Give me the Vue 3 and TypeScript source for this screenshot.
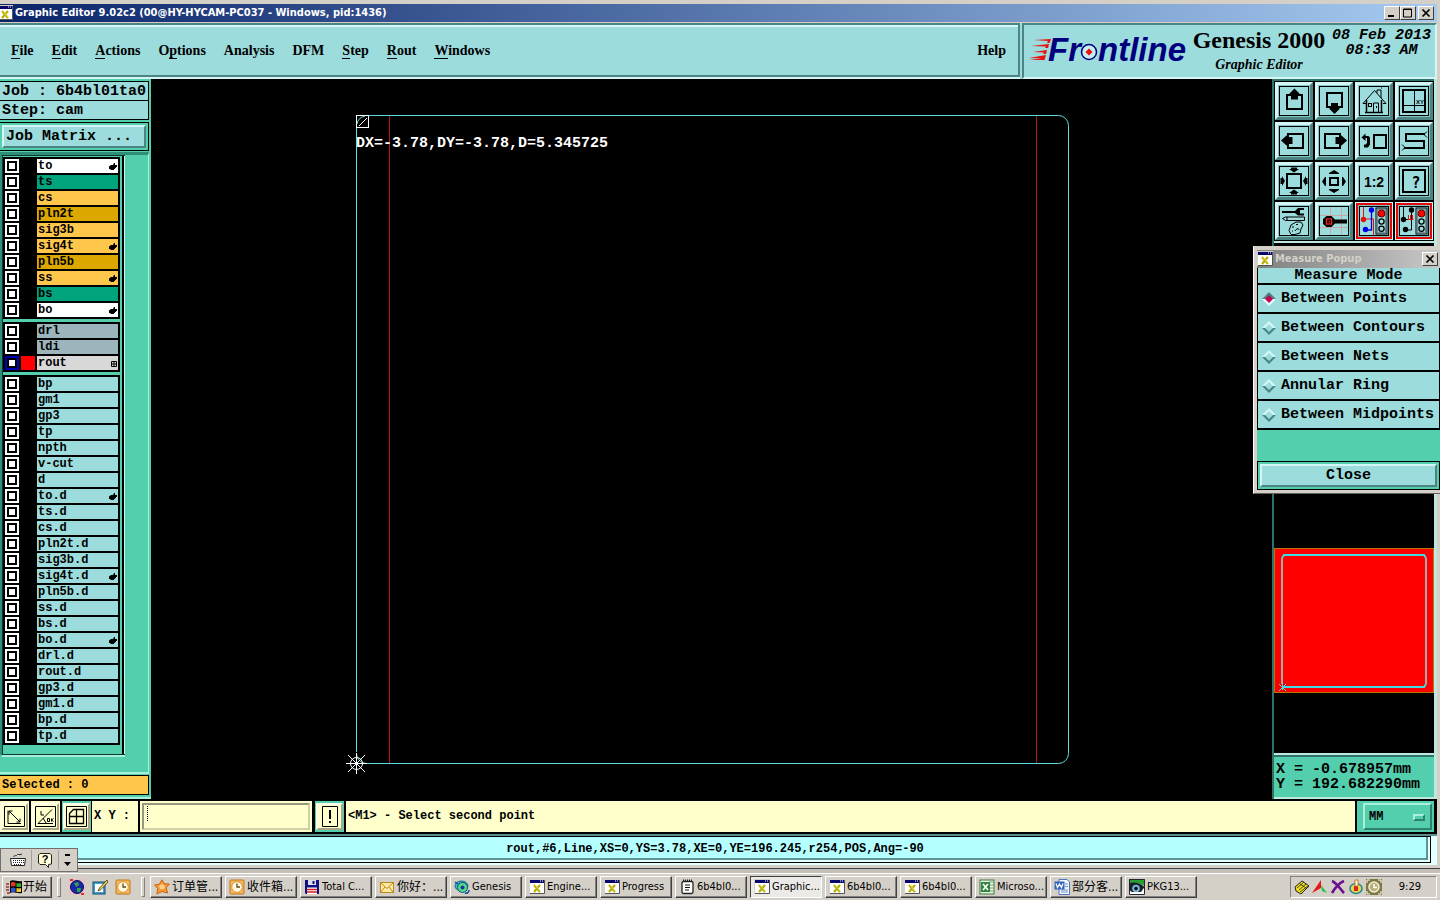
<script setup lang="ts">
import { ref } from 'vue'

interface Layer {
  name: string
  tone: string
  mark?: 'hand' | 'grid'
  active?: boolean
}
interface MenuEntry {
  before: string
  key: string
  after: string
}
interface Task {
  text: string
  icon: string
  active?: boolean
  cjk?: boolean
}

const menus: MenuEntry[] = [
  { before: '', key: 'F', after: 'ile' },
  { before: '', key: 'E', after: 'dit' },
  { before: '', key: 'A', after: 'ctions' },
  { before: 'O', key: 'p', after: 'tions' },
  { before: 'Analysis', key: '', after: '' },
  { before: 'DFM', key: '', after: '' },
  { before: '', key: 'S', after: 'tep' },
  { before: '', key: 'R', after: 'out' },
  { before: '', key: 'W', after: 'indows' },
]

const plain = (name: string, mark?: 'hand'): Layer => ({ name, tone: 'cyan', mark })

const layerGroups: Layer[][] = [
  [
    { name: 'to', tone: 'white', mark: 'hand' },
    { name: 'ts', tone: 'green' },
    { name: 'cs', tone: 'orange' },
    { name: 'pln2t', tone: 'gold' },
    { name: 'sig3b', tone: 'orange' },
    { name: 'sig4t', tone: 'orange', mark: 'hand' },
    { name: 'pln5b', tone: 'gold' },
    { name: 'ss', tone: 'orange', mark: 'hand' },
    { name: 'bs', tone: 'green' },
    { name: 'bo', tone: 'white', mark: 'hand' },
  ],
  [
    { name: 'drl', tone: 'slate' },
    { name: 'ldi', tone: 'slate' },
    { name: 'rout', tone: 'silver', mark: 'grid', active: true },
  ],
  [
    plain('bp'), plain('gm1'), plain('gp3'), plain('tp'), plain('npth'), plain('v-cut'), plain('d'),
    plain('to.d', 'hand'), plain('ts.d'), plain('cs.d'), plain('pln2t.d'), plain('sig3b.d'),
    plain('sig4t.d', 'hand'), plain('pln5b.d'), plain('ss.d'), plain('bs.d'), plain('bo.d', 'hand'),
    plain('drl.d'), plain('rout.d'), plain('gp3.d'), plain('gm1.d'), plain('bp.d'), plain('tp.d'),
  ],
]

const lights =
  '<rect x="17" y="2" width="11" height="26" fill="none" stroke="#000"/><rect x="18.500" y="3.500" width="8" height="23" fill="none" stroke="#789"/><circle cx="22.500" cy="7.500" r="3.500" fill="red" stroke="#600"/><circle cx="22.500" cy="15.500" r="2.600" fill="#9cdcdc" stroke="#000" stroke-width="1.300"/><circle cx="22.500" cy="22.700" r="2.600" fill="#9cdcdc" stroke="#000" stroke-width="1.300"/>'

const tools: { name: string; alert?: boolean; art: string }[] = [
  { name: 'Pan up', art: '<rect x="8" y="9" width="15" height="14" fill="none" stroke="#000" stroke-width="2"/><path d="M15.500 2.500l5 5v1.500H19v4.500h-7V9h-1.500V7.500z"/>' },
  { name: 'Pan down', art: '<rect x="8" y="7" width="15" height="14" fill="none" stroke="#000" stroke-width="2"/><path d="M15.500 28l5-5v-1.500H19V17h-7v4.500h-1.500V23z"/>' },
  { name: 'Home', art: '<g fill="none" stroke="#000"><path d="M4 17.500L15.500 4.500 27 17.500M4 17.500h3M24 17.500h3M18 7V4h4v8M22.500 1.500v1"/><path d="M7.500 14v12.500h15V14M6 26.500h18" stroke-width="1.500"/><rect x="9.500" y="17.500" width="3" height="3"/><path d="M14.500 26v-9h5v9M17.500 20v2"/></g>' },
  { name: 'XY window', art: '<rect x="4" y="4" width="22" height="22" fill="none" stroke="#000" stroke-width="2"/><path d="M15.500 4v22M4 19.500h22" stroke="#000"/><text x="17" y="18" font-family="Liberation Sans" font-size="6" font-weight="bold">XY</text>' },
  { name: 'Pan left', art: '<rect x="9" y="8" width="15" height="14" fill="none" stroke="#000" stroke-width="2"/><path d="M2 14.500l5.500-5H9V11h4.500v7H9v1.500H7.500z"/>' },
  { name: 'Pan right', art: '<rect x="6" y="8" width="15" height="14" fill="none" stroke="#000" stroke-width="2"/><path d="M28 14.500l-5.500-5H21V11h-4.500v7H21v1.500h1.500z"/>' },
  { name: 'Previous view', art: '<rect x="15" y="9" width="12" height="13" fill="none" stroke="#000" stroke-width="2"/><path d="M2.500 11.500l4-4v2.500h3l1.500 1.500v7l-2 3H5v-3h2l1-2v-4.500H6.500v3z"/>' },
  { name: 'Snake path', art: '<g fill="none" stroke="#000"><path d="M26 8H7v7h18v7H5" stroke-width="2"/><path d="M25 8.500l3-3M25 8.500l3 3M6 21.500l-3-3M6 21.500l-3 3"/></g>' },
  { name: 'Zoom in', art: '<rect x="8" y="8" width="14" height="14" fill="none" stroke="#000" stroke-width="2"/><path d="M12 1.500h6v1.500h2L15 6.500 10 3h2zM12 28.500h6V27h2l-5-3.500L10 27h2zM1.500 12v6H3v2l3-5-3-5v2zM28.500 12v6H27v2l-3-5 3-5v2z"/>' },
  { name: 'Zoom out', art: '<rect x="11" y="12" width="8" height="7" fill="none" stroke="#000" stroke-width="2"/><path d="M15 4l5 3v1H10V7zM15 27l5-3v-1H10v1zM3 15.500L6 11h1v9H6zM27 15.500L24 11h-1v9h1z"/>' },
  { name: 'One to two', art: '<text x="15" y="21" text-anchor="middle" font-family="Liberation Sans" font-size="14" font-weight="bold">1:2</text>' },
  { name: 'Query', art: '<rect x="4" y="4" width="22" height="22" fill="none" stroke="#000" stroke-width="2"/><text x="17" y="22" text-anchor="middle" font-family="DejaVu Sans Mono" font-size="15" font-weight="bold">?</text>' },
  { name: 'Utilities', art: '<path d="M3 5h13l3-3h6v2h-4v3.500h4v2h-6L16 7H3z"/><path d="M3.500 12.500l3-1.500h19v3.500h-19zM8 11v3.500" fill="none" stroke="#000"/><path d="M12 19l5-3h5l2 3-2 4-1 4-5 1.500h-4l-2-4z" fill="none" stroke="#000"/><path d="M13 21h2M17 18.500h2M13 25h1M16 25c2-3 4-3 4-1" fill="none" stroke="#000"/>' },
  { name: 'Probe', art: '<path d="M11.500 1v28M22.500 1v28M1 9.500h28M1 21.500h28" stroke="#c9a6a6"/><path d="M7.500 10h5l3.500 3.500h12v4H16L12.500 21h-5L4 18v-5z"/><rect x="7.500" y="13" width="5" height="5" fill="none" stroke="#e22" stroke-width="1.300"/><rect x="9.500" y="15" width="1.500" height="1.500" fill="#e22"/>' },
  { name: 'Net display', alert: true, art: '<path d="M4.500 1v12h10v16" fill="none" stroke="#e01010"/><path d="M12.500 4v20H6" fill="none" stroke="#0000e8" stroke-width="1.300"/><circle cx="4.500" cy="13.500" r="2.700" fill="#e01010"/><circle cx="12.500" cy="4" r="2.700" fill="#0000e8"/><circle cx="6.500" cy="23.500" r="2.700" fill="#0000e8"/>' + lights },
  { name: 'Net check', alert: true, art: '<path d="M4.500 1v12M12.500 4v20H6M4.500 13.500h8" fill="none" stroke="#000"/><circle cx="4.500" cy="13.500" r="2.700"/><circle cx="12.500" cy="4" r="2.700"/><circle cx="6.500" cy="23.500" r="2.700"/><path d="M8.500 13.500h6M9.500 13V9M11.500 13V9M13.500 13V9" stroke="#e01010" fill="none"/>' + lights },
]

const xwin =
  '<rect x=".5" y=".5" width="15" height="14" fill="#fff" stroke="#d4d0c8"/><path d="M1 1h14v3H1z" fill="#08086a"/><path d="M11 2h1M13 2h1" stroke="#fff"/><path d="M15.500 1v13.500H1" stroke="#555" fill="none"/><path d="M5 6l6 7M11 6l-6 7" stroke="#b8b000" stroke-width="2.200"/><path d="M6 6l5 6" stroke="#e8e060"/>'
const clock =
  '<rect x="1" y="1" width="14" height="14" rx="1" fill="#f4b860" stroke="#c07818"/><circle cx="8" cy="8" r="5.300" fill="#fff8e0" stroke="#e09838"/><path d="M8 4.500V8h3" stroke="#664418" stroke-width="1.300" fill="none"/>'
const notepad =
  '<rect x="3" y="2.500" width="11" height="12" rx="1.500" fill="#fff" stroke="#222" stroke-width="1.300"/><path d="M4 1.500h9" stroke="#222" stroke-width="2" stroke-dasharray="1 1"/><path d="M6 6h5M6 8.500h5M6 11h4" stroke="#111" stroke-width="1.200"/>'

const icons: Record<string, string> = {
  xwin,
  clock,
  notepad,
  star: '<path d="M8 .8l2.200 4 5.200.2-3.200 3.700 1.500 5.300L8 12.500 2.800 15l1-5.500L.5 6l4.800-.8z" fill="#f49838" stroke="#cc6410"/><path d="M5 7l3-2 3 2-1 3H6z" fill="#ffd08a"/>',
  disk: '<path d="M1 1h14v14H2l-1-1z" fill="#101080"/><rect x="4" y="1" width="8" height="5" fill="#dde"/><rect x="8.500" y="2" width="2" height="3" fill="#101080"/><rect x="3" y="8.500" width="10" height="6.500" fill="#fff"/><path d="M3 10.500h10M3 13h10" stroke="#d02020" stroke-width="1.300"/>',
  mail: '<rect x="1.500" y="3.500" width="13" height="10" fill="#ffe9a0" stroke="#b88a20"/><path d="M1.500 3.500L8 9.500l6.500-6M1.500 13.500L6 8M14.500 13.500L10 8" fill="none" stroke="#b88a20"/>',
  genesis: '<ellipse cx="7.500" cy="7" rx="6.500" ry="5" fill="#38b8c0" stroke="#107080"/><circle cx="8.500" cy="8.500" r="5" fill="#58d880" stroke="#1048a0"/><circle cx="8.500" cy="8.500" r="2" fill="#1838a0"/><path d="M1 3l3 2M11 14c2 1 4-1 4-3" stroke="#104890" stroke-width="1.500" fill="none"/>',
  excel: '<rect x="1" y="1" width="14" height="14" fill="#e7f3e2" stroke="#3a7a38"/><path d="M10 3h5M10 6h5M10 9h5M10 12h5" stroke="#78a878"/><rect x="2" y="3" width="9" height="10" fill="#2f8540"/><path d="M4 5l5 6M9 5l-5 6" stroke="#fff" stroke-width="1.600"/>',
  word: '<path d="M5 .5h8l2.500 2.500v12.500H5z" fill="#f4f8ff" stroke="#5074b8"/><path d="M11 5h3M11 7.500h3M7 11h7M7 13h7" stroke="#7090cc"/><rect x=".5" y="2.500" width="10" height="8" fill="#3464b8"/><path d="M2 4.500l1.500 4 2-3.500 2 3.500 1.500-4" fill="none" stroke="#fff" stroke-width="1.200"/>',
  eye: '<rect width="16" height="16" fill="#fff"/><path d="M0 0h16v7L9 4 0 5z" fill="#28a030"/><path d="M0 4.500C5 2 12 4 15.500 8L12 13H3L0 11z" fill="#182028"/><circle cx="7" cy="9.500" r="3.800" fill="#78b4d8"/><circle cx="7" cy="9.500" r="1.700" fill="#000"/><path d="M.5.5h15v15H.5z" fill="none" stroke="#223"/>',
  globe: '<rect width="16" height="16" fill="#e8c0c8"/><circle cx="8" cy="8" r="6.500" fill="#1828a8" stroke="#081050"/><path d="M5 4l4-1 1 3-3 2zM8 9l4 0-1 4-3 0z" fill="#38a048"/><path d="M1 1l3 0M12 15h3" stroke="#d83030" stroke-width="2"/>',
  desk: '<rect x="1" y="3" width="12" height="12" fill="#48a0c8" stroke="#124a70"/><rect x="3" y="5" width="8" height="8" fill="#fff"/><path d="M15 1L7.500 9 6 12l3-1.500L16 3z" fill="#f0d060" stroke="#443310" stroke-width=".8"/>',
}

const quick = [
  { name: 'Browser', icon: 'globe' },
  { name: 'Show desktop', icon: 'desk' },
  { name: 'Outlook', icon: 'clock' },
]

const tasks: Task[] = [
  { text: '订单管...', icon: 'star', cjk: true },
  { text: '收件箱...', icon: 'clock', cjk: true },
  { text: 'Total C...', icon: 'disk' },
  { text: '你好：...', icon: 'mail', cjk: true },
  { text: 'Genesis', icon: 'genesis' },
  { text: 'Engine...', icon: 'xwin' },
  { text: 'Progress', icon: 'xwin' },
  { text: '6b4bl0...', icon: 'notepad' },
  { text: 'Graphic...', icon: 'xwin', active: true },
  { text: '6b4bl0...', icon: 'xwin' },
  { text: '6b4bl0...', icon: 'xwin' },
  { text: 'Microso...', icon: 'excel' },
  { text: '部分客...', icon: 'word', cjk: true },
  { text: 'PKG13...', icon: 'eye' },
]

const modes = ['Between Points', 'Between Contours', 'Between Nets', 'Annular Ring', 'Between Midpoints']
const mode = ref(modes[0])
const xy = ref('')
</script>

<template>
  <div class="desktop">
    <div class="window">
      <header class="titlebar">
        <svg class="ico" viewBox="0 0 16 16" v-html="xwin"></svg>
        <h1>Graphic Editor 9.02c2 (00@HY-HYCAM-PC037 - Windows, pid:1436)</h1>
        <div class="winbtns">
          <button type="button" aria-label="Minimize"><svg viewBox="0 0 12 10"><path d="M2 7h6v2H2z" /></svg></button>
          <button type="button" aria-label="Maximize"><svg viewBox="0 0 12 10"><path d="M1.500 1v8h8V1zM1 1.500h9" fill="none" stroke="#000" /></svg></button>
          <button type="button" class="x" aria-label="Close window"><svg viewBox="0 0 12 10"><path d="M2.500 1.500l7 7M9.500 1.500l-7 7" stroke="#000" stroke-width="1.700" /></svg></button>
        </div>
      </header>

      <div class="head">
        <nav class="menubar">
          <a v-for="m in menus" :key="m.before + m.key" href="#">{{ m.before }}<span class="key">{{ m.key }}</span>{{ m.after }}</a>
          <a href="#" class="help">Help</a>
        </nav>
        <div class="brand">
          <div class="logo">
            <svg class="speed" viewBox="0 0 22 24">
              <path fill="#e81010" d="M5 2l17-1-1.500 4H18l1-2zM2 8l18-2-1 4h-3l1-1.500zM4 14l14-2-1 4h-3l1-1.500zM0 20l17-3-1.500 5H0l13-1.500z" />
            </svg>
            <span>Fr</span>
            <svg class="target" viewBox="0 0 18 20">
              <circle cx="9" cy="10" r="7.500" fill="#c8eeee" stroke="#00007f" stroke-width="1.500" />
              <path d="M9 6.500l3.500 3.500L9 13.500 5.500 10z" fill="#e81010" />
            </svg>
            <span>ntline</span>
          </div>
          <div class="product">
            <strong>Genesis 2000</strong>
            <em>Graphic Editor</em>
          </div>
          <div class="date"><span>08 Feb 2013</span><span>08:33 AM</span></div>
        </div>
      </div>

      <main class="work">
        <aside class="left">
          <div class="jobinfo">
            <div>Job : 6b4bl01ta0</div>
            <div>Step: cam</div>
          </div>
          <div class="matrix"><button type="button">Job Matrix ...</button></div>
          <div class="layerpane">
            <div class="layerbox">
              <div v-for="(g, i) in layerGroups" :key="i" class="group">
                <label v-for="l in g" :key="l.name" class="layer">
                  <input type="checkbox" :class="{ on: l.active }" />
                  <span class="swatch" :class="{ red: l.active }"></span>
                  <span class="lname" :class="l.tone">
                    {{ l.name }}
                    <svg v-if="l.mark === 'hand'" viewBox="0 0 8 7"><path d="M0 3.500L2 2h2l1-2h1v2h2v2H7v1H6v1H5v1H2L1 6H0z" /></svg>
                    <svg v-else-if="l.mark === 'grid'" viewBox="0 0 8 7"><path d="M2.500 1.500h5v5h-5zM5 1v5.500M2 4h6" fill="none" stroke="#000" /></svg>
                  </span>
                </label>
              </div>
            </div>
          </div>
          <div class="selected">Selected : 0</div>
        </aside>

        <svg class="canvas" viewBox="151 79 1121 720" role="img" aria-label="Board outline">
          <path d="M389.500 116v647M1036.500 116v647" stroke="#b41818" />
          <path d="M356.500 752V115.500h702a10 10 0 0 1 10 10V753.500a10 10 0 0 1-10 10H366a10 10 0 0 1-9.500-10" fill="none" stroke="#5cdcdc" />
          <rect x="356.500" y="115.500" width="12" height="12" fill="none" stroke="#fff" />
          <path d="M359 126l8-8" stroke="#fff" />
          <path d="M357 124a10 10 0 0 1 8-8" fill="none" stroke="#5cdcdc" />
          <text x="356" y="147">DX=-3.78,DY=-3.78,D=5.345725</text>
          <g stroke="#fff" fill="none">
            <circle cx="356.500" cy="763.500" r="6" />
            <path d="M346 763.500h21M356.500 753v21M348 755l17 17M365 755l-17 17" />
          </g>
        </svg>

        <aside class="right">
          <div class="tools">
            <button v-for="t in tools" :key="t.name" type="button" :aria-label="t.name" :class="{ alert: t.alert }">
              <svg viewBox="0 0 30 30" v-html="t.art"></svg>
            </button>
          </div>
          <div class="overview">
            <svg viewBox="0 0 160 145" role="img" aria-label="Overview">
              <rect x=".5" y=".5" width="159" height="144" fill="red" stroke="#b87800" />
              <path d="M9 7h142M9 139h142" stroke="#40dce4" stroke-width="2" />
              <path d="M8 10v126M152 10v126" stroke="#a8a8a8" stroke-width="2" />
              <path d="M8 10l2-3M150 7l2 3M152 136l-2 3" stroke="#40dce4" stroke-width="2" />
              <path d="M5 136l7 7M12 136l-7 7M8.500 134v8" stroke="#40dce4" />
            </svg>
          </div>
          <div class="coords"><span>X = -0.678957mm</span><span>Y = 192.682290mm</span></div>
        </aside>
      </main>

      <div class="prompt">
        <div class="pcell"><button type="button" aria-label="Distance snap"><svg viewBox="0 0 21 21"><path d="M.5.500h20v20H.5zM4 4.500v13h13M5 5l11 11M5 8.500V5h3.500M16 12.500V16h-3.500" fill="none" stroke="#000" /></svg></button></div>
        <div class="pcell"><button type="button" aria-label="Angle snap"><svg viewBox="0 0 21 21"><path d="M.5.500h20v20H.5zM3 17.500h15M3 17.500L17 3.500M6 5v4h3M8 12l3 5" fill="none" stroke="#000" /><path d="M12.500 12.500h2v3h-2zM16.500 12.500v3M18.500 12.500l-2 1.500 2 1.500" fill="none" stroke="#000" /></svg></button></div>
        <div class="pcell teal"><button type="button" aria-label="Grid snap"><svg viewBox="0 0 21 21"><path d="M.5.500h20v20H.5z" fill="none" stroke="#000" /><path d="M3.500 7.500l4-4h10v14h-14zM3 10.500h15M10.500 3v15" fill="none" stroke="#000" stroke-width="1.300" /></svg></button></div>
        <label class="xy" for="xy">X Y :</label>
        <div class="entry"><input id="xy" v-model="xy" type="text" /><i class="caret"></i></div>
        <div class="pcell teal bang"><button type="button" aria-label="Alert"><svg viewBox="0 0 21 21"><path d="M3.500.500h15v20h-15z" fill="none" stroke="#000" /><path d="M10 4h2v9h-2zM10 15h2v2h-2z" /></svg></button></div>
        <output class="message">&lt;M1&gt; - Select second point</output>
        <div class="unit">
          <select aria-label="Units"><option>MM</option><option>INCH</option></select>
          <i></i>
        </div>
      </div>
      <div class="status"><p>rout,#6,Line,XS=0,YS=3.78,XE=0,YE=196.245,r254,POS,Ang=-90</p></div>
    </div>

    <section class="popup" aria-label="Measure Popup">
      <header>
        <svg class="ico" viewBox="0 0 16 16" v-html="xwin"></svg>
        <h2>Measure Popup</h2>
        <button type="button" aria-label="Close popup"><svg viewBox="0 0 12 10"><path d="M2.500 1.500l7 7M9.500 1.500l-7 7" stroke="#000" stroke-width="1.700" /></svg></button>
      </header>
      <fieldset>
        <legend>Measure Mode</legend>
        <label v-for="m in modes" :key="m">
          <input v-model="mode" type="radio" name="mode" :value="m" />
          <svg viewBox="0 0 14 14">
            <path d="M0 7l7-7 7 7z" :fill="mode === m ? '#4c8484' : '#d4f6f6'" />
            <path d="M0 7l7 7 7-7z" :fill="mode === m ? '#e4ffff' : '#4c8484'" />
            <path d="M3 7l4-4 4 4-4 4z" :fill="mode === m ? '#c80050' : '#9cdcdc'" />
          </svg>
          <span>{{ m }}</span>
        </label>
      </fieldset>
      <div class="closebox"><button type="button">Close</button></div>
    </section>

    <div class="langbar">
      <button type="button" aria-label="Keyboard">
        <svg viewBox="0 0 16 16"><path d="M.5 6.500h15l-1 7h-13zM4 5c0-3 2 0 3-2s2 1 5-1" fill="#fff" stroke="#222" /><path d="M3 8.500h11M3 10.500h11M4 12.500h8" stroke="#222" stroke-dasharray="1 1" /></svg>
      </button>
      <button type="button" aria-label="Help">
        <svg viewBox="0 0 16 16"><path d="M3 1.500h10l1.500 1.500v9l-3 .5v3l-3-3H3L1.500 11V3z" fill="#ffffd8" stroke="#222" /><text x="8" y="11" text-anchor="middle" font-family="Liberation Sans" font-size="11" font-weight="bold">?</text></svg>
      </button>
      <button type="button" aria-label="Options"><svg viewBox="0 0 16 16"><path d="M5 2h5v2H5zM4 10h7l-3.500 4z" /></svg></button>
    </div>

    <footer class="taskbar">
      <button type="button" class="start">
        <svg class="ico" viewBox="0 0 16 16"><path d="M0 5h3M0 8h3M0 11h3M1 14h3" stroke="#a03030" stroke-width="1.500" /><path d="M4 2c4-2 7 1 12 0v12c-5 1-8-2-12 0z" fill="#000" /><path d="M5 3.500c2-1 3-.5 4.500 0v4C8 7 7 7 5 7.500z" fill="#e83820" /><path d="M10.500 4c2 .5 3 .5 4.500 0v4h-4.500z" fill="#30b030" /><path d="M5 9c2-1 3-.5 4.500 0v4C8 12.500 7 12.500 5 13z" fill="#2858e0" /><path d="M10.500 9c2 .5 3 .5 4.500 0v4h-4.500z" fill="#f0c820" /></svg>
        <span>开始</span>
      </button>
      <i class="grip"></i>
      <div class="quick">
        <button v-for="q in quick" :key="q.name" type="button" :aria-label="q.name"><svg class="ico" viewBox="0 0 16 16" v-html="icons[q.icon]"></svg></button>
      </div>
      <i class="grip"></i>
      <div class="tasks">
        <button v-for="(t, i) in tasks" :key="i" type="button" :class="{ active: t.active, cjk: t.cjk }">
          <svg class="ico" viewBox="0 0 16 16" v-html="icons[t.icon]"></svg><span>{{ t.text }}</span>
        </button>
      </div>
      <div class="tray">
        <svg class="ico" viewBox="0 0 16 16"><path d="M1 8l7-6 7 5-8 8-5-3z" fill="#f0e020" stroke="#222" /><path d="M3 9l7-6M5 11l7-6M6 13l8-6M6 5l6 4" stroke="#222" stroke-width=".8" /></svg>
        <svg class="ico" viewBox="0 0 16 16"><path d="M0 14L9 1v8z" fill="#e81818" /><path d="M9 6l6 8-5-2z" fill="#20c040" /></svg>
        <svg class="ico" viewBox="0 0 16 16"><path d="M2 2c5 2 8 8 12 12M14 2C9 4 5 9 2 14" stroke="#6a1090" stroke-width="2.600" fill="none" /></svg>
        <svg class="ico" viewBox="0 0 16 16"><ellipse cx="8" cy="9.500" rx="6" ry="5" fill="#e8d840" stroke="#188898" stroke-width="1.500" /><path d="M6 7h4v5H6z" fill="#e02020" /><path d="M7 1h3v6H7z" fill="#fff" stroke="#c87818" /></svg>
        <svg class="ico" viewBox="0 0 16 16"><rect width="16" height="16" fill="#7c7840" /><circle cx="8" cy="8" r="5" fill="#b8b078" stroke="#f0f0e0" stroke-width="1.500" /><path d="M8 5v3.500h3" stroke="#fff" stroke-width="1.500" fill="none" /><path d="M1 4V1h3M12 1h3v3M15 12v3h-3M4 15H1v-3" stroke="#fff" fill="none" /></svg>
        <time>9:29</time>
      </div>
    </footer>
  </div>
</template>

<style>
html,
body {
  background: #000;
}
</style>

<style scoped>
* {
  box-sizing: border-box;
}
.desktop {
  --cyan: #9cdcdc;
  --hi: #d4f6f6;
  --lo: #4c8484;
  --teal: #54cfae;
  --gray: #d4d0c8;
  --yellow: #ffffcc;
  --ui: 'DejaVu Sans Condensed', 'Noto Sans', 'Noto Sans CJK SC', sans-serif;
  --mono: 'Liberation Mono', 'Noto Sans CJK SC', monospace;
  --serif: 'Liberation Serif', serif;
  position: relative;
  display: flex;
  flex-direction: column;
  min-height: 100vh;
  overflow: hidden;
  font-family: var(--mono);
  font-weight: bold;
  font-size: 12px;
  color: #000;
  background: var(--gray);
}
button,
input,
select {
  font: inherit;
  color: inherit;
  margin: 0;
  padding: 0;
  border: 0;
  border-radius: 0;
  background: none;
}
svg {
  display: block;
  flex: none;
}
h1,
h2,
p {
  margin: 0;
}
a {
  color: inherit;
  text-decoration: none;
}
.ico {
  width: 16px;
  height: 16px;
}
.window {
  flex: 1;
  display: flex;
  flex-direction: column;
  padding: 4px 3px 3px 0;
  border-bottom: 1px solid #404040;
}

/* title bar */
.titlebar {
  display: flex;
  align-items: center;
  gap: 2px;
  height: 18px;
  margin-bottom: 1px;
  padding-right: 3px;
  overflow: hidden;
  background: linear-gradient(90deg, #0a246a, #a6caf0);
}
.titlebar .ico {
  margin-left: -3px;
}
.titlebar h1 {
  flex: 1;
  font: bold 11px/18px var(--ui);
  color: #fff;
  white-space: nowrap;
}
.winbtns {
  display: flex;
}
.winbtns button,
.popup header button {
  display: grid;
  place-items: center;
  width: 16px;
  height: 14px;
  background: var(--gray);
  border: 1px solid;
  border-color: #fff #404040 #404040 #fff;
}
.winbtns .x {
  margin-left: 2px;
}
.winbtns svg,
.popup header button svg {
  width: 12px;
  height: 10px;
}

/* menu + brand */
.head {
  display: flex;
  height: 56px;
  background: var(--cyan);
}
.menubar {
  flex: 1;
  display: flex;
  align-items: center;
  gap: 18px;
  padding: 2px 12px 0 11px;
  border-top: 2px solid var(--lo);
  border-right: 2px solid var(--lo);
  border-bottom: 2px solid var(--lo);
  box-shadow: inset 0 2px var(--hi), 0 2px var(--hi);
  font: bold 14px/18px var(--serif);
  height: 54px;
}
.key {
  border-bottom: 1px solid #000;
}
.help {
  margin-left: auto;
}
.brand {
  display: flex;
  align-items: flex-start;
  width: 415px;
  margin-left: 2px;
  padding: 1px 4px 0 5px;
  border: 2px solid;
  border-color: var(--lo) var(--hi) var(--hi) var(--lo);
}
.logo {
  display: flex;
  align-items: center;
  padding-top: 6px;
  font: italic bold 33px/36px 'Liberation Sans', sans-serif;
  color: #00007f;
}
.speed {
  width: 22px;
  height: 24px;
  margin-right: -3px;
}
.target {
  width: 18px;
  height: 20px;
  margin: 3px 0 0 -1px;
}
.product {
  display: flex;
  flex-direction: column;
  align-items: center;
  flex: 1;
  white-space: nowrap;
  font-family: var(--serif);
}
.product strong {
  font-size: 24px;
  line-height: 28px;
}
.product em {
  font-size: 14px;
  line-height: 22px;
}
.date {
  display: flex;
  flex-direction: column;
  align-items: center;
  padding-top: 2px;
  font-size: 15px;
  font-style: italic;
  line-height: 15px;
}

/* work area */
.work {
  flex: 1;
  display: flex;
  background: #000;
  border-bottom: 1px solid #000;
}
.left {
  display: flex;
  flex-direction: column;
  width: 151px;
  padding: 2px 2px 2px 0;
  background: var(--teal);
  border-bottom: 2px solid #a8f0dc;
}
.jobinfo {
  font-size: 15px;
  line-height: 19px;
  border: 1px solid #000;
  border-left: 0;
}
.jobinfo div {
  height: 18px;
  padding-left: 2px;
  background: var(--cyan);
}
.jobinfo div + div {
  border-top: 1px solid #000;
  height: 19px;
}
.matrix {
  margin-top: 2px;
  padding: 2px;
  height: 29px;
  border: 1px solid #000;
  border-left: 0;
}
.matrix button,
.closebox button {
  display: block;
  width: 100%;
  height: 23px;
  background: var(--cyan);
  border: 2px solid;
  border-color: var(--hi) var(--lo) var(--lo) var(--hi);
  font-size: 15px;
  line-height: 17px;
}
.matrix button {
  padding-left: 2px;
  text-align: left;
}
.layerpane {
  flex: 1;
  margin-top: 1px;
  border-top: 3px solid #2f8e78;
  border-bottom: 2px solid #a8f0dc;
  border-right: 1px solid #a8f0dc;
}
.layerbox {
  width: 123px;
  display: flex;
  flex-direction: column;
  gap: 3px;
  margin-left: 2px;
  padding: 1px 5px 9px 0;
  border: 1px solid #0b3a30;
  border-right: 0;
  box-shadow: inset -1px 0 var(--hi), inset -3px 0 #000, 0 2px #a8f0dc, -2px 0 #2f8e78;
}
.group {
  display: flex;
  flex-direction: column;
  gap: 2px;
  padding: 2px;
  background: #000;
}
.layer {
  display: flex;
  height: 14px;
}
.layer input {
  appearance: none;
  width: 14px;
  height: 14px;
  background: #fff;
  border: 2px solid #fff;
  box-shadow: inset 0 0 0 2px #000;
}
.layer input.on {
  border-color: #0000b4;
}
.swatch {
  width: 14px;
  margin: 0 2px;
}
.swatch.red {
  background: #f00;
}
.lname {
  flex: 1;
  display: flex;
  justify-content: space-between;
  align-items: center;
  padding: 0 1px;
  line-height: 14px;
}
.lname svg {
  width: 8px;
  height: 7px;
}
.white { background: #fff; }
.green { background: #00a47c; }
.orange { background: #ffc64c; }
.gold { background: #dca800; }
.slate { background: #9cb4bc; }
.silver { background: #d8d8d8; }
.cyan { background: var(--cyan); }
.selected {
  height: 20px;
  margin-top: 1px;
  padding-left: 2px;
  border: 1px solid #000;
  border-left: 0;
  background: #ffc64c;
  line-height: 19px;
}
.canvas {
  flex: 1;
  min-width: 0;
  height: 720px;
}
.canvas text {
  font: bold 15px var(--mono);
  fill: #fff;
}
.right {
  display: flex;
  flex-direction: column;
  width: 165px;
  border-left: 2px solid #2f7468;
  border-right: 3px solid #bce8e0;
}
.tools {
  display: grid;
  grid-template-columns: repeat(4, 38px);
  grid-auto-rows: 38px;
  gap: 2px;
  padding: 1px;
  border-top: 2px solid #2f7468;
  border-bottom: 2px solid #bce8e0;
}
.tools button {
  padding: 1px;
  background: #84c4c4;
  border: 3px solid;
  border-color: var(--hi) var(--lo) var(--lo) var(--hi);
}
.tools svg {
  width: 30px;
  height: 30px;
  background: var(--cyan);
  outline: 1px solid #000;
  outline-offset: -1px;
}
.tools .alert {
  border-color: #e00808;
  outline: 1px solid var(--hi);
  outline-offset: -1px;
}
.overview {
  flex: 1;
  display: flex;
  align-items: flex-end;
  padding-bottom: 62px;
}
.overview svg {
  width: 160px;
  height: 145px;
}
.coords {
  display: flex;
  flex-direction: column;
  padding: 5px 2px;
  background: var(--teal);
  border-top: 2px solid #2f7468;
  border-bottom: 2px solid #bce8e0;
  box-shadow: 0 -2px #bce8e0;
  font-size: 15px;
  line-height: 15px;
}

/* prompt line */
.prompt {
  display: flex;
  height: 34px;
  padding: 1px 3px 2px 0;
  gap: 2px;
  background: #000;
}
.pcell {
  display: grid;
  place-items: center;
  width: 29px;
  background: var(--yellow);
}
.pcell button {
  display: grid;
  place-items: center;
  width: 27px;
  height: 27px;
  border: 2px solid;
  border-color: #ffffe8 #a8a888 #a8a888 #ffffe8;
  background: var(--yellow);
}
.pcell svg {
  width: 21px;
  height: 21px;
}
.pcell.teal {
  background: var(--teal);
}
.bang {
  margin-left: 1px;
}
.xy {
  width: 46px;
  margin-left: -1px;
  padding-left: 2px;
  line-height: 31px;
  background: var(--yellow);
}
.entry {
  position: relative;
  width: 172px;
  padding: 2px;
  background: var(--yellow);
}
.entry input {
  width: 100%;
  height: 27px;
  padding: 0 4px;
  border: 2px solid;
  border-color: #98987c #d0d0a8 #d0d0a8 #98987c;
}
.caret {
  position: absolute;
  left: 7px;
  top: 5px;
  height: 15px;
  border-left: 1px dotted #000;
}
.message {
  flex: 1;
  padding-left: 2px;
  line-height: 31px;
  background: var(--yellow);
}
.unit {
  position: relative;
  width: 77px;
  padding: 2px 2px 2px 6px;
  background: var(--teal);
}
.unit select {
  appearance: none;
  width: 100%;
  height: 27px;
  padding-left: 4px;
  border: 2px solid;
  border-color: #a8f0dc #2f8070 #2f8070 #a8f0dc;
}
.unit i {
  position: absolute;
  right: 9px;
  top: 13px;
  width: 12px;
  height: 7px;
  border: 2px solid;
  border-color: #a8f0dc #2f8070 #2f8070 #a8f0dc;
  pointer-events: none;
}
.status {
  height: 31px;
  padding-right: 6px;
  background: #e4ffff;
  border-top: 2px solid #5c9090;
}
.status p {
  height: 27px;
  border: 1px solid #000;
  border-left: 0;
  background: #b4ffff;
  box-shadow: inset -2px -2px #e4ffff, inset -4px -4px #5c9494;
  line-height: 25px;
  text-align: center;
}

/* measure popup */
.popup {
  position: absolute;
  right: 0;
  top: 246px;
  width: 187px;
  padding: 4px 0 3px 3px;
  background: var(--gray);
  border-left: 1px solid #fff;
  border-bottom: 1px solid #606060;
}
.popup header {
  display: flex;
  align-items: center;
  gap: 2px;
  height: 18px;
  padding: 0 2px 0 0;
  background: linear-gradient(90deg, #808080, #c8c8c8);
}
.popup h2 {
  flex: 1;
  font: bold 11px/18px var(--ui);
  color: #d4d0c8;
}
.popup fieldset {
  display: flex;
  flex-direction: column;
  gap: 2px;
  margin: 0 0 31px;
  padding: 0 1px 2px;
  border: 0;
  background: #000;
  font-size: 15px;
  min-width: 0;
  box-shadow: 0 31px var(--teal);
}
.popup legend {
  float: left;
  width: 100%;
  height: 15px;
  padding: 0;
  background: var(--cyan);
  text-align: center;
  line-height: 16px;
}
.popup label {
  display: flex;
  align-items: center;
  gap: 5px;
  height: 27px;
  padding-left: 4px;
  background: var(--cyan);
  white-space: nowrap;
}
.popup label input {
  appearance: none;
  position: absolute;
}
.popup label svg {
  width: 14px;
  height: 14px;
}
.closebox {
  padding: 2px;
  border: 1px solid #000;
  background: var(--teal);
}

/* language bar */
.langbar {
  position: absolute;
  left: 0;
  bottom: 28px;
  display: flex;
  align-items: center;
  width: 78px;
  height: 24px;
  padding-left: 4px;
  background: var(--gray);
  border: 1px solid #707070;
}
.langbar button {
  display: grid;
  place-items: center;
  width: 27px;
  height: 20px;
  border-right: 1px solid #a0a0a0;
}
.langbar button:last-child {
  width: 17px;
  border: 0;
}
.langbar svg {
  width: 16px;
  height: 16px;
}

/* task bar */
.taskbar {
  display: flex;
  align-items: center;
  height: 31px;
  padding: 5px 3px 0 2px;
  font: 11px/16px var(--ui);
  box-shadow: inset 0 4px #c4c0b8, inset 0 5px #fff;
}
.taskbar button {
  display: flex;
  align-items: center;
  height: 22px;
}
.taskbar .start,
.tasks button {
  gap: 2px;
  padding: 0 2px 0 3px;
  border: 1px solid;
  border-color: #fff #404040 #404040 #fff;
  box-shadow: inset -1px -1px #808080;
  white-space: nowrap;
}
.taskbar .start {
  width: 50px;
  gap: 1px;
}
.taskbar .start,
.tasks .cjk {
  font-size: 12px;
}
.grip {
  width: 4px;
  height: 20px;
  margin: 0 5px;
  border: 1px solid;
  border-color: #fff #808080 #808080 #fff;
}
.quick {
  display: flex;
  gap: 7px;
  padding: 0 5px 0 3px;
}
.tasks {
  flex: 1;
  display: flex;
  gap: 3px;
  min-width: 0;
}
.tasks button {
  width: 72px;
}
.tasks .active {
  border-color: #404040 #fff #fff #404040;
  box-shadow: none;
  background: #eceae6;
}
.tray {
  display: flex;
  align-items: center;
  gap: 2px;
  width: 147px;
  height: 22px;
  padding: 0 15px 0 3px;
  border: 1px solid;
  border-color: #808080 #fff #fff #808080;
}
.tray time {
  margin-left: auto;
}
</style>
